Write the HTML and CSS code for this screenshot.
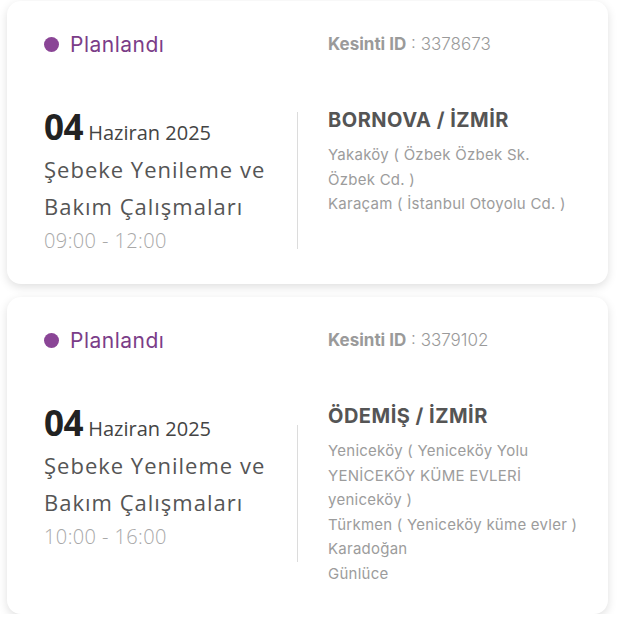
FILE: index.html
```html
<!DOCTYPE html>
<html lang="tr">
<head>
<meta charset="utf-8">
<title>Kesintiler</title>
<link rel="stylesheet" href="styles.css">
</head>
<body>
<div class="list">
  <div class="card">
    <div class="top">
      <div class="status"><span class="dot"></span>Planlandı</div>
      <div class="id"><b>Kesinti ID</b> : 3378673</div>
    </div>
    <div class="row">
      <div class="left">
        <div class="date"><span class="day">04</span> Haziran 2025</div>
        <div class="title">Şebeke Yenileme ve<br>Bakım Çalışmaları</div>
        <div class="time">09:00 - 12:00</div>
      </div>
      <div class="divider"></div>
      <div class="right">
        <div class="city">BORNOVA / İZMİR</div>
        <div class="areas">
          <div>Yakaköy ( Özbek Özbek Sk.<br>Özbek Cd. )</div>
          <div>Karaçam ( İstanbul Otoyolu Cd. )</div>
        </div>
      </div>
    </div>
  </div>
  <div class="card">
    <div class="top">
      <div class="status"><span class="dot"></span>Planlandı</div>
      <div class="id"><b>Kesinti ID</b> : 3379102</div>
    </div>
    <div class="row">
      <div class="left">
        <div class="date"><span class="day">04</span> Haziran 2025</div>
        <div class="title">Şebeke Yenileme ve<br>Bakım Çalışmaları</div>
        <div class="time">10:00 - 16:00</div>
      </div>
      <div class="divider"></div>
      <div class="right">
        <div class="city">ÖDEMİŞ / İZMİR</div>
        <div class="areas">
          <div>Yeniceköy ( Yeniceköy Yolu<br>YENİCEKÖY KÜME EVLERİ<br>yeniceköy )</div>
          <div>Türkmen ( Yeniceköy küme evler )</div>
          <div>Karadoğan</div>
          <div>Günlüce</div>
        </div>
      </div>
    </div>
  </div>
</div>
</body>
</html>
```
FILE: styles.css
```css
* { box-sizing: border-box; }
html, body { margin: 0; padding: 0; background: #fff; }
body { font-family: "Open Sans", "Noto Sans", sans-serif; }

.list {
  display: flex;
  flex-direction: column;
  gap: 13px;
  padding: 1px 9px 0 7px;
}

.card {
  background: #fff;
  border-radius: 14px;
  box-shadow: 0 3px 10px rgba(0, 0, 0, 0.13);
  padding: 31px 37px 28px 37px;
}

.top {
  display: flex;
  align-items: center;
  height: 24px;
}

.status {
  width: 284px;
  display: flex;
  align-items: center;
  font-family: "Inter", sans-serif;
  font-size: 21px;
  color: #7b3d88;
  letter-spacing: 0.5px;
}

.dot {
  width: 15px;
  height: 15px;
  border-radius: 50%;
  background: #8a4596;
  margin-right: 11px;
}

.id {
  font-family: "Inter", sans-serif;
  font-size: 17px;
  color: #9a9a9a;
  font-weight: 300;
}
.id b { font-weight: 700; }

.row {
  display: flex;
  margin-top: 49px;
}

.left {
  width: 253px;
  flex: none;
}

.date {
  font-size: 20px;
  color: #444;
  line-height: 40px;
  padding-top: 2px;
}
.day {
  font-size: 35px;
  font-weight: 700;
  color: #222;
  letter-spacing: -0.5px;
}

.title {
  font-size: 22px;
  color: #555;
  line-height: 37px;
  letter-spacing: 1px;
  margin-top: -2px;
}

.time {
  font-size: 20px;
  font-weight: 300;
  color: #a8a8a8;
  line-height: 31px;
  letter-spacing: 0.4px;
}

.divider {
  width: 1px;
  height: 137px;
  background: #dcdcdc;
  align-self: center;
  flex: none;
}

.right {
  flex: 1;
  padding-left: 30px;
}

.city {
  font-family: "Inter", sans-serif;
  font-size: 20px;
  font-weight: 700;
  color: #555;
  line-height: 28px;
  letter-spacing: 0.5px;
  padding-top: 1px;
}

.areas {
  font-family: "Inter", sans-serif;
  font-size: 15px;
  color: #9c9c9c;
  line-height: 24.5px;
  margin-top: 9px;
  letter-spacing: 0.25px;
}
.areas div { white-space: nowrap; }
```
